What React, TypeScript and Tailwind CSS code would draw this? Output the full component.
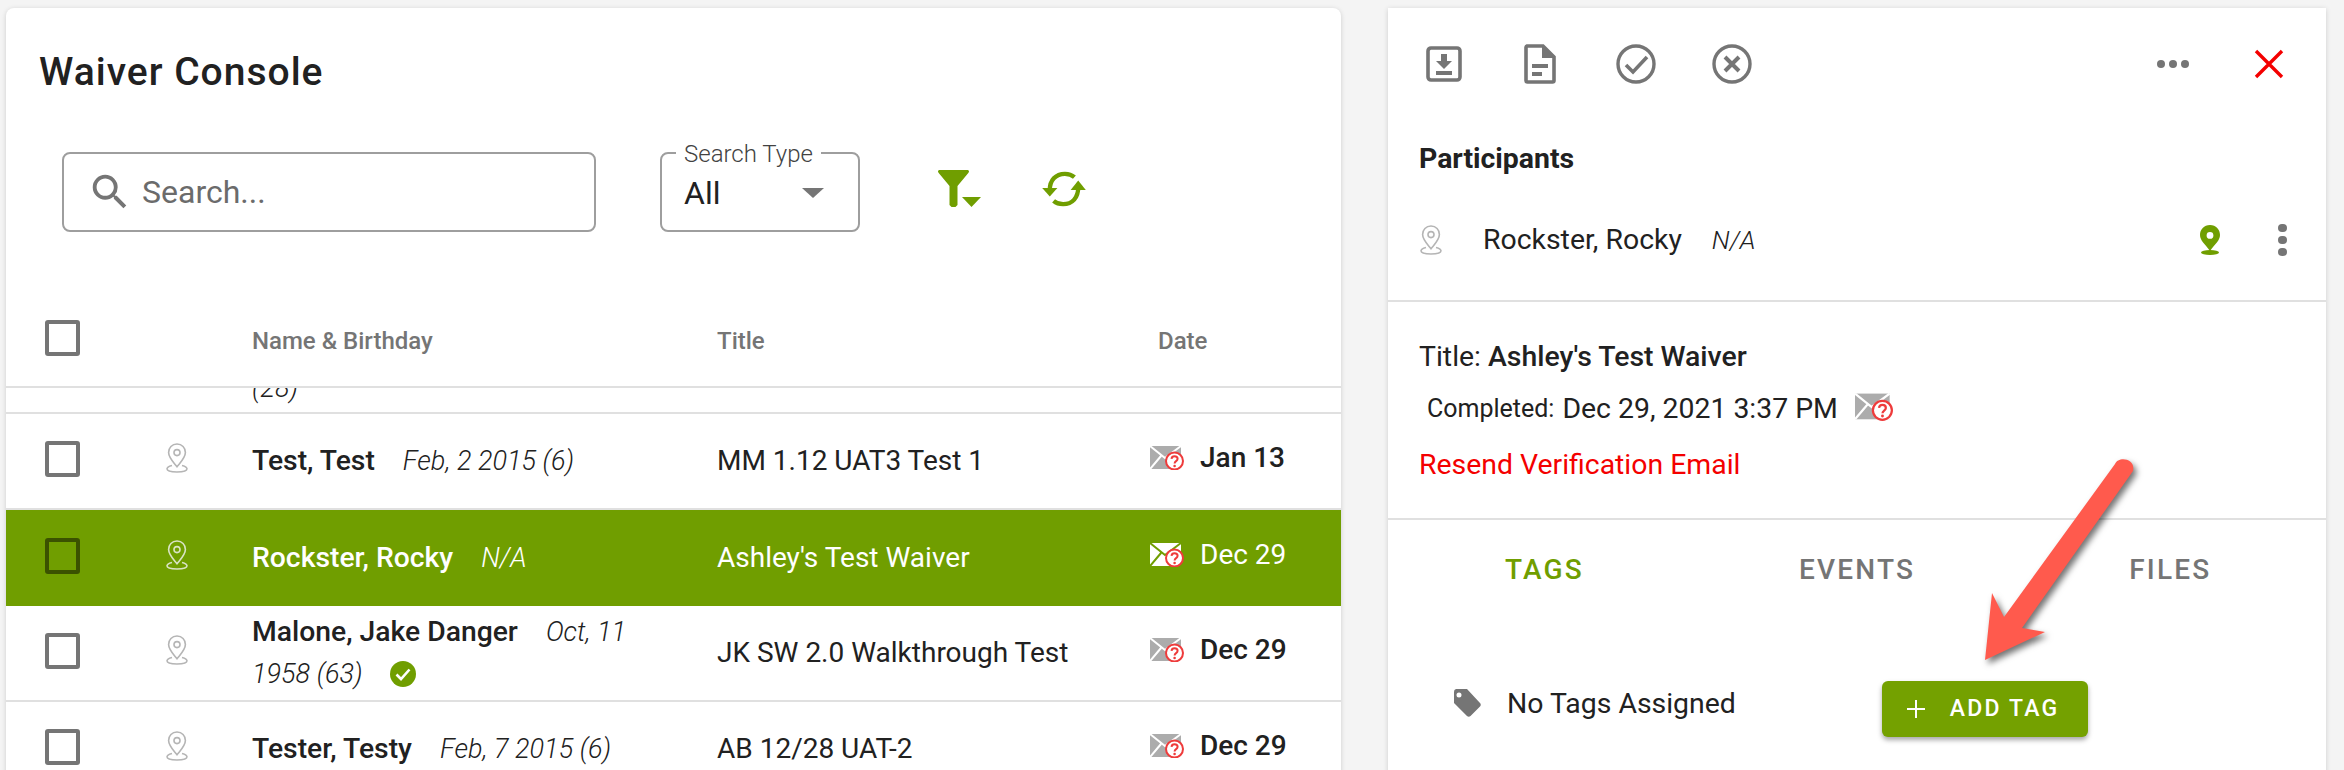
import React from "react";

const FONT = { fontFamily: "Roboto, 'Liberation Sans', sans-serif" };

function Pin({ light }: { light?: boolean }) {
  const c = light ? "#d9e3c4" : "#b5b5b5";
  return (
    <svg width="22" height="30" viewBox="0 0 22 30" fill="none" stroke={c} strokeWidth="1.6">
      <path d="M11 1C6 1 2.6 4.8 2.6 9.4c0 5 4.6 9.6 8.4 14.4 3.8-4.8 8.4-9.4 8.4-14.4C19.4 4.8 16 1 11 1Z" />
      <circle cx="11" cy="9.6" r="3" />
      <path d="M6 22.4c-3 .8-5 2-5 3.4C1 27.8 5.4 29 11 29s10-1.2 10-3.2c0-1.4-2-2.6-5-3.4" />
    </svg>
  );
}

function Box({ dark }: { dark?: boolean }) {
  return (
    <div className={`w-[35px] h-[36px] rounded-[3px] border-[4px] ${dark ? "border-[#3b5200]" : "border-[#757575]"}`} />
  );
}

function Mail({ light, w = 34, h = 24 }: { light?: boolean; w?: number; h?: number }) {
  const body = light ? "#ffffff" : "#acacac";
  const line = light ? "#709e00" : "#ffffff";
  return (
    <svg width={w} height={h} viewBox="0 0 34 24">
      <rect x="0" y="0" width="31" height="23" fill={body} />
      <path d="M0 0l15 12L31 0M0 23l11-13M31 23L20 10" fill="none" stroke={line} strokeWidth="2" />
      <circle cx="24.5" cy="15" r="8.500" fill="#ffffff" stroke="#ee3b3b" strokeWidth="2" />
      <path d="M21.500 12.800c.2-1.800 1.400-2.600 3-2.600 1.800 0 3.100 1.100 3.100 2.600 0 2.400-3 2.300-3 4.700" fill="none" stroke="#ee3b3b" strokeWidth="2" />
      <circle cx="24.6" cy="20" r="1.300" fill="#ee3b3b" />
    </svg>
  );
}

function Row({
  name, dob, title, date, selected, wrap, border = true,
}: { name: string; dob: string; title: string; date: string; selected?: boolean; wrap?: boolean; border?: boolean }) {
  return (
    <div
      className={`flex items-center shrink-0 h-[96px] ${selected ? "bg-[#709e00] text-white" : "bg-white text-[#212121]"} ${border ? "border-b-2 border-[#e0e0e0]" : ""}`}
    >
      <div className="w-[160px] pl-[39px] shrink-0 -mt-[4px]"><Box dark={selected} /></div>
      <div className="w-[86px] shrink-0 -mt-[6px]"><Pin light={selected} /></div>
      <div className="w-[465px] shrink-0 pr-[40px] text-[27px] leading-[42px]">
        <span className="font-medium text-[28.3px] mr-[28px]">{name}</span>
        <span className="italic font-light">{dob}</span>
        {wrap && (
          <span className="inline-block align-[-4px] ml-[27px]">
            <svg width="26" height="26" viewBox="0 0 26 26">
              <circle cx="13" cy="13" r="13" fill="#709e00" />
              <path d="M6.5 13.5l4.5 4.5 8.5-9.5" fill="none" stroke="#fff" strokeWidth="2.6" />
            </svg>
          </span>
        )}
      </div>
      <div className="w-[433px] shrink-0 text-[28px] font-normal">{title}</div>
      <div className="flex items-center -mt-[6px]">
        <Mail light={selected} />
        <span className={`ml-[16px] text-[28px] ${selected ? "font-normal" : "font-medium"}`}>{date}</span>
      </div>
    </div>
  );
}

export default function App() {
  return (
    <div className="h-[770px] w-[2344px] overflow-hidden bg-[#f4f4f4] flex items-start pt-[8px] pl-[6px]" style={FONT}>
      {/* Left card */}
      <div className="w-[1335px] h-[800px] bg-white rounded-[8px] shadow-[0_1px_5px_rgba(0,0,0,0.16)] flex flex-col overflow-hidden shrink-0">
        <h1 className="pl-[33px] pt-[42px] text-[39px] leading-[44px] font-medium text-[#212121] tracking-[1px]">Waiver Console</h1>
        <div className="flex items-center mt-[58px] pl-[56px]">
          <div className="w-[534px] h-[80px] rounded-[8px] border-2 border-[#9e9e9e] flex items-center pl-[23px]">
            <svg width="46" height="46" viewBox="0 0 24 24" fill="#757575">
              <path d="M15.5 14h-.79l-.28-.27A6.471 6.471 0 0 0 16 9.5 6.5 6.5 0 1 0 9.500 16c1.610 0 3.090-.59 4.230-1.570l.27.28v.79l5 4.990L20.490 19l-4.990-5zm-6 0C7.010 14 5 11.990 5 9.500S7.010 5 9.500 5 14 7.010 14 9.500 11.990 14 9.500 14z" />
            </svg>
            <span className="ml-[9px] text-[32px] font-normal text-[#6b6b6b]">Search...</span>
          </div>
          <div className="relative ml-[64px] w-[200px] h-[80px] rounded-[8px] border-2 border-[#9e9e9e] flex items-center justify-between pl-[22px] pr-[34px]">
            <span className="absolute left-[14px] -top-[14px] bg-white px-[8px] text-[24px] leading-[28px] font-light text-[#424242]">Search Type</span>
            <span className="text-[32px] text-[#212121] mt-[2px]">All</span>
            <span className="w-0 h-0 border-l-[11px] border-r-[11px] border-t-[10px] border-l-transparent border-r-transparent border-t-[#757575] mt-[2px]" />
          </div>
          <svg width="46" height="40" viewBox="0 0 46 40" fill="#709e00" className="ml-[77px] -mt-[6px]">
            <path d="M1 2.5C1 1.5 1.8 1 2.6 1h27.8c.8 0 1.6.5 1.6 1.5 0 .6-.4 1-.7 1.4L20.5 17v19l-2 2h-4l-2-2V17L1.7 3.9C1.4 3.5 1 3.1 1 2.5Z" />
            <path d="M25 28h19l-9.5 10Z" />
          </svg>
          <svg width="44" height="36" viewBox="0 0 46 38" className="ml-[59px] -mt-[6px]" fill="none" stroke="#709e00" strokeWidth="4.6">
            <path d="M8 20C8 10 14 3 24 3c4 0 7.500 1.300 10 3.500" />
            <path d="M38 17.500C38 28 32 35 22 35c-4 0-7.500-1.300-10-3.500" />
            <path d="M0 18h16l-8 9Z" fill="#709e00" stroke="none" />
            <path d="M30 20h16l-8-10Z" fill="#709e00" stroke="none" />
          </svg>
        </div>

        <div className="flex items-center h-[92px] mt-[64px] border-b-2 border-[#e0e0e0] text-[24px] font-medium text-[#757575] shrink-0">
          <div className="w-[246px] pl-[39px] shrink-0 -mt-[6px]"><Box /></div>
          <div className="w-[465px] shrink-0">Name &amp; Birthday</div>
          <div className="w-[441px] shrink-0">Title</div>
          <div>Date</div>
        </div>
        <div className="h-[26px] shrink-0 border-b-2 border-[#e0e0e0] overflow-hidden pl-[246px]">
          <div className="-mt-[16px] italic font-light text-[27px] leading-[32px] text-[#212121]">(28)</div>
        </div>
        <Row name="Test, Test" dob="Feb, 2 2015 (6)" title="MM 1.12 UAT3 Test 1" date="Jan 13" />
        <Row name="Rockster, Rocky" dob="N/A" title="Ashley's Test Waiver" date="Dec 29" selected border={false} />
        <Row name="Malone, Jake Danger" dob="Oct, 11 1958 (63)" title="JK SW 2.0 Walkthrough Test" date="Dec 29" wrap />
        <Row name="Tester, Testy" dob="Feb, 7 2015 (6)" title="AB 12/28 UAT-2" date="Dec 29" />
      </div>

      {/* Right card */}
      <div className="relative ml-[47px] w-[938px] h-[800px] bg-white shadow-[0_1px_5px_rgba(0,0,0,0.16)] shrink-0 text-[#212121] pt-[36px]">
        <div className="flex items-center h-[40px] pl-[38px] pr-[42px]">
          <svg width="36" height="36" viewBox="0 0 36 36" fill="none">
            <rect x="2" y="2" width="32" height="32" rx="3" stroke="#757575" strokeWidth="3.600" />
            <path d="M15 8h6v7h5l-8 8-8-8h5Z" fill="#757575" />
            <rect x="10" y="25" width="16" height="4" fill="#757575" />
          </svg>
          <svg width="32" height="40" viewBox="0 0 32 40" fill="none" className="ml-[62px]">
            <path d="M3 2h16l11 11v23.500a1.500 1.500 0 0 1-1.500 1.500h-25A1.500 1.500 0 0 1 2 36.500V3.500A1.500 1.500 0 0 1 3 2Z" stroke="#757575" strokeWidth="3.600" />
            <path d="M18 2l12 12H18Z" fill="#757575" />
            <rect x="8" y="20" width="16" height="4" fill="#757575" />
            <rect x="8" y="28" width="10" height="4" fill="#757575" />
          </svg>
          <svg width="40" height="40" viewBox="0 0 40 40" fill="none" className="ml-[60px]">
            <circle cx="20" cy="20" r="18" stroke="#757575" strokeWidth="3.400" />
            <path d="M10 21l7 7 14-15" stroke="#757575" strokeWidth="3.600" />
          </svg>
          <svg width="40" height="40" viewBox="0 0 40 40" fill="none" className="ml-[56px]">
            <circle cx="20" cy="20" r="18" stroke="#757575" strokeWidth="3.400" />
            <path d="M13 13l14 14M27 13L13 27" stroke="#757575" strokeWidth="4" />
          </svg>
          <div className="ml-auto flex gap-[4px] items-center">
            <span className="w-[8px] h-[8px] rounded-full bg-[#757575]" />
            <span className="w-[8px] h-[8px] rounded-full bg-[#757575]" />
            <span className="w-[8px] h-[8px] rounded-full bg-[#757575]" />
          </div>
          <svg width="30" height="30" viewBox="0 0 30 30" className="ml-[65px]" stroke="#f40000" strokeWidth="3.400">
            <path d="M2 2l26 26M28 2L2 28" />
          </svg>
        </div>
        <div className="pl-[31px] mt-[59px] text-[28.4px] leading-[32px] font-bold">Participants</div>
        <div className="flex items-center pl-[32px] pr-[39px] mt-[45px] h-[40px]">
          <Pin />
          <span className="ml-[41px] text-[28.4px] font-normal">Rockster, Rocky</span>
          <span className="ml-[30px] text-[26px] font-light italic">N/A</span>
          <svg width="22" height="30" viewBox="0 0 22 30" className="ml-auto" fill="#709e00">
            <path fillRule="evenodd" d="M11 0C5 0 1 4.500 1 10c0 5.500 5 9 10 16 5-7 10-10.500 10-16C21 4.500 17 0 11 0Zm0 7a3.400 3.400 0 1 1 0 6.800A3.400 3.400 0 0 1 11 7Z" />
            <ellipse cx="11" cy="27.500" rx="9" ry="2.500" />
          </svg>
          <div className="ml-[57px] flex flex-col gap-[4px]">
            <span className="w-[9px] h-[8px] rounded-full bg-[#757575]" />
            <span className="w-[9px] h-[8px] rounded-full bg-[#757575]" />
            <span className="w-[9px] h-[8px] rounded-full bg-[#757575]" />
          </div>
        </div>
        <div className="mt-[40px] border-t-2 border-[#e0e0e0] pl-[31px] pt-[37px] h-[218px]">
          <div className="text-[28.4px] leading-[36px]"><span className="font-normal">Title: </span><span className="font-medium">Ashley's Test Waiver</span></div>
          <div className="flex items-center mt-[14px] pl-[8px] h-[40px]">
            <span className="text-[25px] font-normal">Completed:</span>
            <span className="ml-[8px] text-[28.4px] font-normal">Dec 29, 2021 3:37 PM</span>
            <span className="ml-[17px] -mt-[4px]"><Mail w={38} h={28} /></span>
          </div>
          <div className="mt-[18px] text-[28.4px] leading-[36px] text-[#f40000]">Resend Verification Email</div>
        </div>
        <div className="border-t-2 border-[#e0e0e0] flex items-center h-[98px] pt-[4px] text-[28px] tracking-[2.2px] font-medium text-[#757575]">
          <span className="ml-[117px] text-[#709e00]">TAGS</span>
          <span className="ml-[215px]">EVENTS</span>
          <span className="ml-[214px]">FILES</span>
        </div>
        <div className="flex items-center mt-[65px] pl-[65px]">
          <svg width="28" height="28" viewBox="0 0 28 28" fill="#757575" className="-mt-[12px]">
            <path fillRule="evenodd" d="M3 0h11l13 14c1 1 1 2.500 0 3.500L17.500 27c-1 1-2.500 1-3.500 0L1 14V3a3 3 0 0 1 2-3Zm3 3.500a2.500 2.500 0 1 0 0 5 2.500 2.500 0 0 0 0-5Z" />
          </svg>
          <span className="ml-[26px] text-[28.4px] font-normal -mt-[10px]">No Tags Assigned</span>
          <button className="ml-[146px] w-[206px] h-[56px] rounded-[6px] bg-[#74a100] text-white flex items-center pl-[24px] shadow-[0_3px_5px_rgba(0,0,0,0.35)] text-[23px] font-medium tracking-[2.200px]">
            <svg width="20" height="20" viewBox="0 0 20 20" stroke="#fff" strokeWidth="2"><path d="M10 1v18M1 10h18" /></svg>
            <span className="ml-[24px]">ADD TAG</span>
          </button>
        </div>

        {/* Annotation arrow */}
        <svg width="200" height="240" viewBox="0 0 200 240" className="absolute left-[570px] top-[445px] drop-shadow-[3px_4px_3px_rgba(0,0,0,0.55)]">
          <path d="M157 11C160 3 178 5 175 18L64 175L87 179L27 207L34 140L46 164Z" fill="#ff5a4d" />
        </svg>
      </div>
    </div>
  );
}
